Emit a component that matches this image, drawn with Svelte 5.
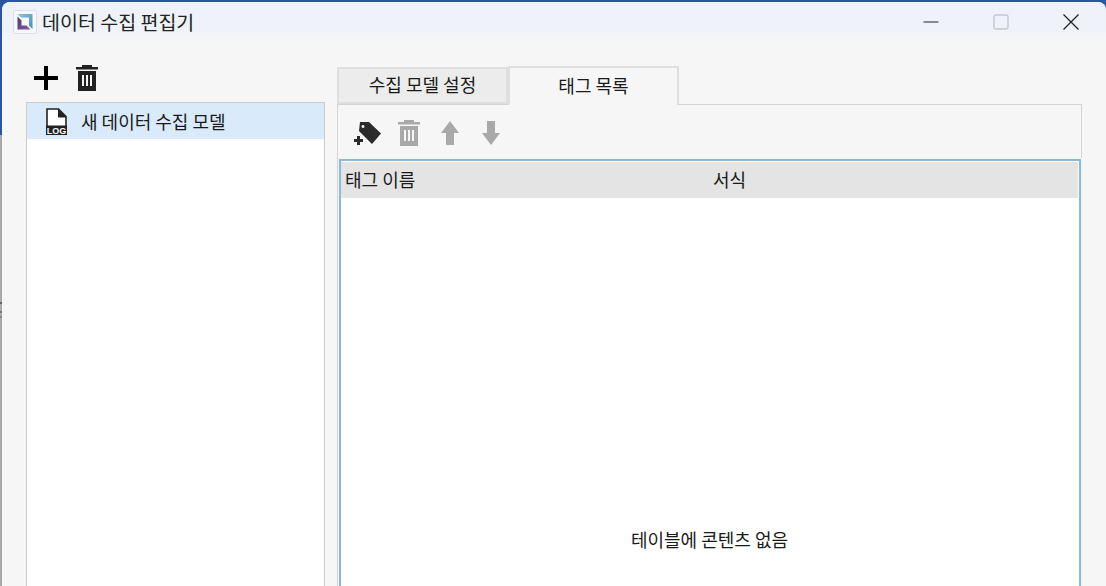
<script lang="ts">
	const tabs = [
		{ label: '수집 모델 설정', active: false },
		{ label: '태그 목록', active: true }
	];
	const columns = ['태그 이름', '서식'];
</script>

<div class="desktop">
	<div class="window">
		<header class="titlebar">
			<span class="app-icon">
				<svg width="20" height="20" viewBox="0 0 20 20">
					<defs>
						<linearGradient id="logo-blue" x1="0" y1="0" x2="1" y2="1">
							<stop offset="0" stop-color="#8fc4da" />
							<stop offset="1" stop-color="#3f8fb5" />
						</linearGradient>
						<linearGradient id="logo-purple" x1="0" y1="0" x2="1" y2="1">
							<stop offset="0" stop-color="#4a3a78" />
							<stop offset="1" stop-color="#8a5aa0" />
						</linearGradient>
					</defs>
					<path d="M2.500 2h15v15l-3.500-3.500V5.500H6z" fill="url(#logo-blue)" />
					<path d="M2.500 4.500l4 4v5h5l4 4h-13z" fill="url(#logo-purple)" />
				</svg>
			</span>
			<span class="title">데이터 수집 편집기</span>
			<div class="winbtns">
				<svg width="16" height="16" viewBox="0 0 16 16"><path d="M0.500 8h15" stroke="#222" stroke-width="1" /></svg>
				<svg width="16" height="16" viewBox="0 0 16 16"><rect x="1" y="1" width="14" height="14" rx="2" fill="none" stroke="#c6c8cc" stroke-width="1.400" /></svg>
				<svg width="16" height="16" viewBox="0 0 16 16"><path d="M0.500 0.500l15 15M15.500 0.500l-15 15" stroke="#222" stroke-width="1.300" /></svg>
			</div>
		</header>

		<div class="main">
			<aside class="side">
				<div class="side-tools">
					<svg width="24" height="24" viewBox="0 0 24 24"><path d="M10 0h4v10h10v4H14v10h-4V14H0v-4h10z" fill="#000" /></svg>
					<svg width="22" height="26" viewBox="0 0 22 26">
						<path d="M0 2h22v2.500H0zM6 0h10v2H6z" fill="#222" />
						<path fill-rule="evenodd" d="M2 6h18v20H2zM6 10v11h2V10zM10 10v11h2V10zM14 10v11h2V10z" fill="#222" />
					</svg>
				</div>
				<div class="list">
					<div class="row">
						<svg width="21" height="27" viewBox="0 0 21 27">
							<path d="M1 18V1h11.500l7.500 7.500V18" fill="#fff" stroke="#222" stroke-width="1.600" />
							<path d="M12 0.500v9h8.500z" fill="#222" />
							<rect x="0" y="17.500" width="21" height="9.500" fill="#222" />
							<text x="10.500" y="25.800" text-anchor="middle" class="log-text">LOG</text>
						</svg>
						<span>새 데이터 수집 모델</span>
					</div>
				</div>
			</aside>

			<section class="content">
				<div class="tabs">
					{#each tabs as tab}
						<div class="tab" class:active={tab.active}>{tab.label}</div>
					{/each}
				</div>
				<div class="pane">
					<div class="toolbar">
						<span class="tool">
							<svg width="28" height="24" viewBox="0 0 28 24">
								<path fill-rule="evenodd" d="M6 1h9l12 11.500-9 10.500L5 10zM9 4a1.500 1.500 0 1 0 0.010 0z" fill="#2b2b2b" />
								<path d="M3 15h3v3h3v3H6v3H3v-3H0v-3h3z" fill="#2b2b2b" />
							</svg>
						</span>
						<span class="tool">
							<svg width="22" height="26" viewBox="0 0 22 26">
								<path d="M0 2h22v2.500H0zM6 0h10v2H6z" fill="#a9a9a9" />
								<path fill-rule="evenodd" d="M2 6h18v20H2zM6 10v11h2V10zM10 10v11h2V10zM14 10v11h2V10z" fill="#a9a9a9" />
							</svg>
						</span>
						<span class="tool">
							<svg width="18" height="24" viewBox="0 0 18 24"><path d="M9 0l9 12h-5v12H5V12H0z" fill="#a9a9a9" /></svg>
						</span>
						<span class="tool">
							<svg width="18" height="24" viewBox="0 0 18 24"><path d="M9 24L0 12h5V0h8v12h5z" fill="#a9a9a9" /></svg>
						</span>
					</div>
					<div class="table">
						<div class="thead">
							{#each columns as col}
								<div class="th">{col}</div>
							{/each}
						</div>
						<div class="tbody">테이블에 콘텐츠 없음</div>
					</div>
				</div>
			</section>
		</div>
	</div>
</div>

<style>
	:global(body) {
		margin: 0;
		overflow: hidden;
	}
	.desktop {
		width: 1106px;
		height: 586px;
		overflow: hidden;
		background: linear-gradient(
			to bottom,
			#2a55a0 0,
			#2a55a0 135px,
			#a9a9a9 135px,
			#a9a9a9 302px,
			#666 302px,
			#666 304px,
			#a9a9a9 304px,
			#a9a9a9 311px,
			#777 311px,
			#777 313px,
			#a9a9a9 313px,
			#a9a9a9 316px,
			#888 316px,
			#888 318px,
			#a9a9a9 318px
		);
		padding: 2px 0 0 2px;
		box-sizing: border-box;
		font-family: "Noto Sans CJK KR", "Liberation Sans", sans-serif;
		color: #1a1a1a;
	}
	.window {
		height: 700px;
		background: #f6f6f6;
		border-radius: 8px 8px 0 0;
		overflow: hidden;
	}
	.titlebar {
		height: 40px;
		display: flex;
		align-items: center;
		padding-left: 11px;
		background: linear-gradient(to bottom, #eef2f8 0, #eff2f7 70%, #f6f6f6 100%);
	}
	.app-icon {
		width: 24px;
		height: 24px;
		display: flex;
		align-items: center;
		justify-content: center;
		background: #f7f8fa;
		border: 1px solid #dcdfe4;
		border-radius: 2px;
		box-sizing: border-box;
	}
	.title {
		margin-left: 5px;
		padding-bottom: 1px;
		font-size: 19.5px;
		color: #222;
	}
	.winbtns {
		margin-left: auto;
		display: flex;
		gap: 54px;
		padding-right: 27px;
	}
	.main {
		display: flex;
		padding: 16px 0 0 24px;
	}
	.side {
		width: 299px;
		flex: none;
	}
	.side-tools {
		display: flex;
		align-items: center;
		gap: 18px;
		height: 44px;
		padding: 0 0 4px 8px;
		box-sizing: border-box;
	}
	.list {
		width: 299px;
		height: 500px;
		background: #fff;
		border: 1px solid #ccc;
		box-sizing: border-box;
	}
	.row {
		height: 36px;
		display: flex;
		align-items: center;
		gap: 14px;
		padding-left: 19px;
		background: #d9ebfb;
		font-size: 18px;
	}
	.log-text {
		font-family: "Liberation Sans", sans-serif;
		font-size: 9px;
		font-weight: 700;
		fill: #fff;
	}
	.content {
		margin-left: 12px;
		width: 745px;
		flex: none;
	}
	.tabs {
		display: flex;
		align-items: flex-end;
		height: 46px;
		box-sizing: border-box;
	}
	.tab {
		width: 171px;
		height: 37px;
		padding-bottom: 3px;
		box-sizing: border-box;
		display: flex;
		align-items: center;
		justify-content: center;
		background: #ececec;
		border: 2px solid #dfdfdf;
		font-size: 18px;
	}
	.tab.active {
		background: #f6f6f6;
		height: 39px;
		margin-bottom: -1px;
		border-bottom: none;
		position: relative;
		z-index: 1;
	}
	.pane {
		border-top: 1px solid #d4d4d4;
		border-left: 1px solid #d4d4d4;
		border-right: 1px solid #d4d4d4;
	}
	.toolbar {
		height: 54px;
		padding-top: 2px;
		display: flex;
		align-items: center;
		padding-left: 9px;
		box-sizing: border-box;
	}
	.tool {
		width: 41px;
		display: flex;
		justify-content: center;
	}
	.table {
		border: 2px solid #8cbad6;
		border-bottom: none;
		background: #fff;
		margin-left: 1px;
		padding: 1px 1px 0 0;
		box-shadow: 0 0 0 1px #eef7fc;
	}
	.thead {
		display: grid;
		grid-template-columns: 368px 1fr;
		height: 36px;
		align-items: center;
		background: #e4e4e4;
		font-size: 18px;
	}
	.th {
		padding: 0 0 2px 4px;
	}
	.tbody {
		padding-top: 328px;
		text-align: center;
		font-size: 18px;
		height: 400px;
	}
</style>
